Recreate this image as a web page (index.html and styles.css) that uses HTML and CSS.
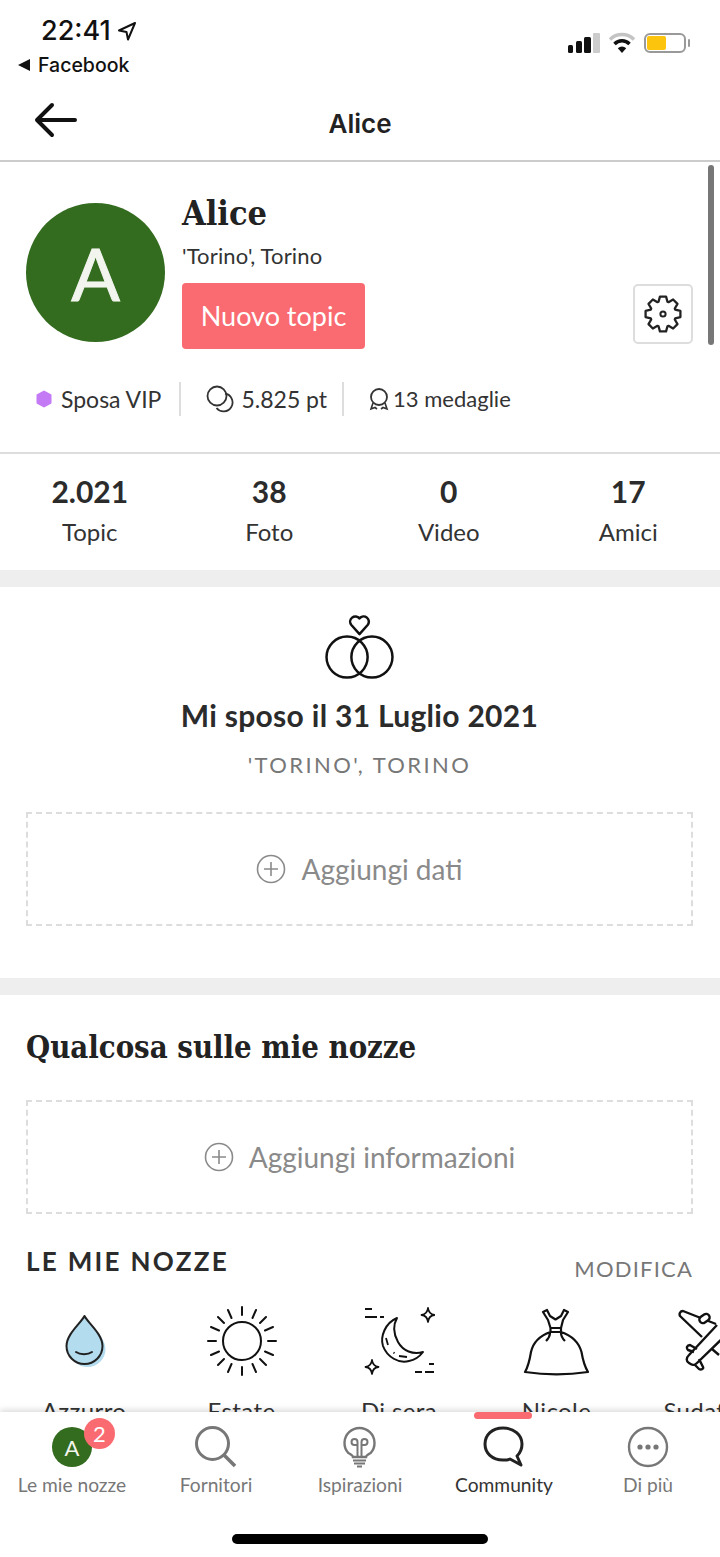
FILE: index.html
```html
<!DOCTYPE html>
<html lang="it">
 <head>
  <meta charset="UTF-8">
  <title>Alice</title>
  <meta name="viewport" content="width=device-width, initial-scale=1.0">
  <link rel="stylesheet" href="styles.css">
 </head>
 <body>
  <div class="screen">
   <div class="status">
    <div class="status-left">
     <div class="clock">22:41
      <svg class="loc" width="20" height="20" viewBox="0 0 20 20"><path d="M18 2 2 9.500l7.500 1.500L11 18.500z" fill="none" stroke="#111" stroke-width="2" stroke-linejoin="round"/></svg>
     </div>
     <div class="back-app"><span class="tri"></span>Facebook</div>
    </div>
    <div class="status-right">
     <svg width="33" height="22" viewBox="0 0 33 22"><rect x="1" y="13" width="5" height="8" rx="1.500" fill="#111"/><rect x="9" y="9" width="6" height="12" rx="1.500" fill="#111"/><rect x="17" y="5" width="7" height="16" rx="1.500" fill="#111"/><rect x="26" y="1" width="7" height="20" rx="1" fill="#ccc"/></svg>
     <svg width="28" height="22" viewBox="0 0 28 22"><path d="M2 7.500a17 17 0 0 1 24 0" fill="none" stroke="#c4c4c4" stroke-width="3.500"/><path d="M6.500 12a10.500 10.500 0 0 1 15 0" fill="none" stroke="#111" stroke-width="3.500"/><path d="M14 21 9.800 16.200a6 6 0 0 1 8.400 0z" fill="#111"/></svg>
     <div class="battery"><span class="battery-fill"></span></div>
    </div>
   </div>

   <header class="topbar">
    <svg class="back" width="44" height="36" viewBox="0 0 44 36"><path d="M41 18H4M18 3 3 18l15 15" fill="none" stroke="#111" stroke-width="4" stroke-linecap="round" stroke-linejoin="round"/></svg>
    <div class="topbar-title">Alice</div>
   </header>

   <section class="profile">
    <div class="profile-main">
     <div class="avatar">A</div>
     <div class="profile-info">
      <h1 class="name">Alice</h1>
      <div class="place">'Torino', Torino</div>
      <div class="new-topic">Nuovo topic</div>
     </div>
     <div class="gear-btn">
      <svg width="38" height="38" viewBox="0 0 38 38"><polygon transform="translate(19 19) scale(1.040)" points="-4.280,-11.750 -2.950,-16.740 2.950,-16.740 4.280,-11.750 5.280,-11.330 9.750,-13.930 13.930,-9.750 11.330,-5.280 11.750,-4.280 16.740,-2.950 16.740,2.950 11.750,4.280 11.330,5.280 13.930,9.750 9.750,13.930 5.280,11.330 4.280,11.750 2.950,16.740 -2.950,16.740 -4.280,11.750 -5.280,11.330 -9.750,13.930 -13.930,9.750 -11.330,5.280 -11.750,4.280 -16.740,2.950 -16.740,-2.950 -11.750,-4.280 -11.330,-5.280 -13.930,-9.750 -9.750,-13.930 -5.280,-11.330" fill="none" stroke="#222" stroke-width="2.200" stroke-linejoin="round"/><circle cx="19" cy="19" r="2.600" fill="none" stroke="#222" stroke-width="2"/></svg>
     </div>
    </div>
    <div class="meta">
     <div class="meta-item">
      <svg width="16" height="18" viewBox="0 0 16 18"><path d="M8 1.500l6.500 3.700v7.600L8 16.500l-6.500-3.700V5.200z" fill="#c57af5" stroke="#c57af5" stroke-width="2" stroke-linejoin="round"/></svg>
      Sposa VIP
     </div>
     <div class="meta-item coins">
      <svg width="28" height="28" viewBox="0 0 28 28"><circle cx="11" cy="11" r="9.500" fill="none" stroke="#333" stroke-width="1.800"/><path d="M19 8.500a9 9 0 1 1-8.500 14.500" fill="none" stroke="#333" stroke-width="1.800"/></svg>
      5.825 pt
     </div>
     <div class="meta-item medals">
      <svg width="20" height="24" viewBox="0 0 20 24"><circle cx="10" cy="10" r="8" fill="none" stroke="#333" stroke-width="1.800"/><path d="M4 16l-2 6 4-1.500 2 1.500M16 16l2 6-4-1.500-2 1.500" fill="none" stroke="#333" stroke-width="1.600"/></svg>
      13 medaglie
     </div>
    </div>
   </section>

   <section class="stats">
    <div class="stat"><b>2.021</b><span>Topic</span></div>
    <div class="stat"><b>38</b><span>Foto</span></div>
    <div class="stat"><b>0</b><span>Video</span></div>
    <div class="stat"><b>17</b><span>Amici</span></div>
   </section>

   <section class="wedding">
    <svg class="rings" width="69" height="65" viewBox="0 0 72 68"><path d="M36 20 27.500 10.500a5.500 5.500 0 0 1 8.500-7 5.500 5.500 0 0 1 8.500 7z" fill="none" stroke="#111" stroke-width="2.600" stroke-linejoin="round"/><circle cx="23" cy="44" r="21.500" fill="none" stroke="#111" stroke-width="2.600"/><circle cx="49" cy="44" r="21.500" fill="none" stroke="#111" stroke-width="2.600"/></svg>
    <h2 class="wedding-title">Mi sposo il 31 Luglio 2021</h2>
    <div class="wedding-place">'TORINO', TORINO</div>
    <div class="dashed">
     <svg width="30" height="30" viewBox="0 0 30 30"><circle cx="15" cy="15" r="13.500" fill="none" stroke="#8a8a8a" stroke-width="1.600"/><path d="M15 8v14M8 15h14" stroke="#8a8a8a" stroke-width="1.600"/></svg>
     Aggiungi dati
    </div>
   </section>

   <section class="about">
    <h2 class="about-title">Qualcosa sulle mie nozze</h2>
    <div class="dashed">
     <svg width="30" height="30" viewBox="0 0 30 30"><circle cx="15" cy="15" r="13.500" fill="none" stroke="#8a8a8a" stroke-width="1.600"/><path d="M15 8v14M8 15h14" stroke="#8a8a8a" stroke-width="1.600"/></svg>
     Aggiungi informazioni
    </div>
    <div class="section-head">
     <div class="section-title">LE MIE NOZZE</div>
     <div class="section-link">MODIFICA</div>
    </div>
    <div class="themes">
     <div class="theme">
      <svg width="72" height="72" viewBox="0 0 72 72"><path d="M36.500 11C33 18 18.500 29 18.500 41a18 18 0 0 0 36 0C54.500 29 40 18 36.500 11z" fill="#b3dcef" transform="translate(3 3)"/><path d="M36.500 11C33 18 18.500 29 18.500 41a18 18 0 0 0 36 0C54.500 29 40 18 36.500 11z" fill="#b3dcef" stroke="#222" stroke-width="2" stroke-linejoin="round"/><path d="M28 47c4 3 12 3 16 0" fill="none" stroke="#222" stroke-width="2" stroke-linecap="round"/></svg>
      <span>Azzurro</span>
     </div>
     <div class="theme">
      <svg width="72" height="72" viewBox="0 0 72 72"><circle cx="36" cy="36" r="19" fill="none" stroke="#111" stroke-width="2"/><g stroke="#111" stroke-width="2" stroke-linecap="round"><path d="M36 2v8M36 62v8M2 36h8M62 36h8M22 5l3.500 8M46.500 59l3.500 8M50 5l-3.500 8M25.500 59 22 67M5 22l8 3.500M59 46.500l8 3.500M67 22l-8 3.500M13 46.500 5 50M12 12l6 6M54 54l6 6M60 12l-6 6M18 54l-6 6"/></g></svg>
      <span>Estate</span>
     </div>
     <div class="theme">
      <svg width="72" height="72" viewBox="0 0 72 72"><path d="M34 13C22 18 17 32 20 41c4 11 16 18 26 15 6-1 11-5 14-9-10 3-20-1-25-10-5-9-5-17-1-24z" fill="none" stroke="#111" stroke-width="2" stroke-linejoin="round"/><path d="M23 33l2 7M30.500 47.500l1 .8M36 51l8 1" stroke="#111" stroke-width="1.800" fill="none"/><path d="M2 4h7M2 12h12M17 12h4M66 59h5M52 67h7M62 67h9" stroke="#111" stroke-width="2" fill="none"/><path d="M65 3c.5 4 2.500 6.500 6.500 7-4 .5-6 3-6.500 7-.5-4-2.500-6.500-6.500-7 4-.5 6-3 6.500-7zM9 55c.5 4 2.500 6.500 6.500 7-4 .5-6 3-6.500 7-.5-4-2.500-6.500-6.500-7 4-.5 6-3 6.500-7z" fill="none" stroke="#111" stroke-width="1.800" stroke-linejoin="round"/></svg>
      <span>Di sera</span>
     </div>
     <div class="theme">
      <svg width="72" height="72" viewBox="0 0 72 72"><path d="M22 7l4-2 3 6 5.500 3.500L40 11l3-6 4 2-5 8-2 8H29.500L27 15zM29.500 23H40v4H29.500zM29.500 27C18 31 12 38 10 47 8.500 56 7 62 4 67c20 3 43 3 63 0-3-5-5-11-6.500-20C58 38 52 31 40 27M29 28c0 3-2 6-4 8M40 28c0 3 2 6 4 8" fill="none" stroke="#111" stroke-width="2.200" stroke-linejoin="round"/></svg>
      <span>Nicole</span>
     </div>
     <div class="theme">
      <svg width="72" height="72" viewBox="0 0 72 72"><path d="M24 32 2 11c-1-2 0-5 3-5l33 13M39 20 11 50c-3 3-3 6 0 8s5 3 8 0l30-29M16 47l-6-2c-2-2-1-5 2-5l7 4M21 54l4 8c1 2-2 3-4 2l-5-5M34 44l7 6" fill="none" stroke="#111" stroke-width="2.400" stroke-linejoin="round"/><rect x="21" y="10" width="11" height="7" rx="3.500" fill="#fff" stroke="#111" stroke-width="2.400" transform="rotate(-35 26.500 13.500)"/></svg>
      <span>Sudafrica</span>
     </div>
    </div>
   </section>

   <div class="scrollbar"></div>

   <nav class="tabbar">
    <div class="tab">
     <div class="tab-avatar">A<span class="badge">2</span></div>
     <span>Le mie nozze</span>
    </div>
    <div class="tab">
     <svg width="42" height="42" viewBox="0 0 42 42"><circle cx="17.500" cy="17.500" r="16" fill="none" stroke="#777" stroke-width="3"/><path d="M29 29l11 11" stroke="#777" stroke-width="3.500"/></svg>
     <span>Fornitori</span>
    </div>
    <div class="tab">
     <svg width="42" height="42" viewBox="0 0 42 42"><path d="M14 31c0-1.500-2-2.500-4.700-4a15 15 0 1 1 22.400 0C29 28.500 27 29.500 27 31z" fill="none" stroke="#777" stroke-width="2.400"/><path d="M14 34.500h13M15 37.500h11M18 40.500h5M18.500 30V16a3 3 0 1 0-3 3h3M22.500 30V16a3 3 0 1 1 3 3h-3" fill="none" stroke="#777" stroke-width="2"/></svg>
     <span>Ispirazioni</span>
    </div>
    <div class="tab active">
     <svg width="42" height="42" viewBox="0 0 42 42"><path d="M20 2C9 2 2 9 2 18s7 16 18 16c3 0 5 0 7-1l11 6-4-9c3-3 5-8 5-12C39 9 31 2 20 2z" fill="none" stroke="#222" stroke-width="3" stroke-linejoin="round"/></svg>
     <span>Community</span>
    </div>
    <div class="tab">
     <svg width="42" height="42" viewBox="0 0 42 42"><circle cx="21" cy="21" r="19" fill="none" stroke="#777" stroke-width="2.400"/><circle cx="13" cy="21" r="2.600" fill="#777"/><circle cx="21" cy="21" r="2.600" fill="#777"/><circle cx="29" cy="21" r="2.600" fill="#777"/></svg>
     <span>Di più</span>
    </div>
    <div class="home-bar"></div>
   </nav>
  </div>
 </body>
</html>
```

FILE: styles.css
```css
* {
  box-sizing: border-box;
}
body {
  margin: 0;
  font-family: 'Lato', sans-serif;
  color: #333;
  background: #fff;
}
h1, h2 {
  margin: 0;
}
.screen {
  position: relative;
  width: 720px;
  height: 1557px;
  overflow: hidden;
}

/* status bar */
.status {
  height: 90px;
  display: flex;
  justify-content: space-between;
  padding: 14px 34px 0 18px;
}
.clock {
  font-family: 'Inter', sans-serif;
  font-size: 27px;
  font-weight: 500;
  line-height: 34px;
  color: #111;
  padding-left: 23px;
  display: flex;
  align-items: center;
  gap: 6px;
}
.back-app {
  font-family: 'Inter', sans-serif;
  font-size: 19.500px;
  font-weight: 500;
  line-height: 28px;
  color: #111;
  margin-top: 3px;
  display: flex;
  align-items: center;
  gap: 8px;
}
.tri {
  width: 0;
  height: 0;
  border-top: 6px solid transparent;
  border-bottom: 6px solid transparent;
  border-right: 12px solid #111;
}
.status-right {
  display: flex;
  align-items: center;
  gap: 8px;
  height: 30px;
  margin-top: 14px;
}
.battery {
  position: relative;
  width: 42px;
  height: 20px;
  border: 2px solid #999;
  border-radius: 6px;
  padding: 1px;
}
.battery::after {
  content: "";
  position: absolute;
  right: -6px;
  top: 4px;
  width: 2px;
  height: 8px;
  background: #999;
  border-radius: 1px;
}
.battery-fill {
  display: block;
  width: 19px;
  height: 14px;
  background: #fcc40c;
  border-radius: 2px;
}

/* top bar */
.topbar {
  height: 72px;
  border-bottom: 2px solid #ccc;
  display: flex;
  align-items: center;
  justify-content: center;
  position: relative;
}
.back {
  position: absolute;
  left: 34px;
  top: 12px;
}
.topbar-title {
  font-family: 'Inter', sans-serif;
  font-size: 26px;
  font-weight: 600;
  color: #222;
  padding-bottom: 3px;
}

/* profile */
.profile {
  height: 292px;
  border-bottom: 2px solid #ddd;
  padding: 30px 27px 0 26px;
}
.profile-main {
  display: flex;
  align-items: flex-start;
}
.avatar {
  width: 139px;
  height: 139px;
  margin-top: 11px;
  border-radius: 50%;
  background: #336b1f;
  color: #f2f5ee;
  font-size: 72px;
  -webkit-text-stroke: 1px #f2f5ee;
  display: flex;
  align-items: center;
  justify-content: center;
  flex-shrink: 0;
}
.profile-info {
  margin-left: 17px;
  flex: 1;
}
.name {
  font-family: 'DejaVu Serif', serif;
  font-stretch: condensed;
  font-size: 34px;
  line-height: 42px;
  color: #222;
}
.place {
  font-size: 22px;
  letter-spacing: 0.15px;
  line-height: 28px;
  margin-top: 8px;
}
.new-topic {
  width: 183px;
  height: 66px;
  margin-top: 13px;
  background: #f96b71;
  border-radius: 4px;
  color: #fff;
  font-size: 27px;
  display: flex;
  align-items: center;
  justify-content: center;
  padding-bottom: 2px;
}
.gear-btn {
  width: 60px;
  height: 60px;
  margin-top: 92px;
  border: 2px solid #ddd;
  border-radius: 5px;
  display: flex;
  align-items: center;
  justify-content: center;
}
.meta {
  display: flex;
  margin-top: 33px;
  height: 34px;
}
.meta-item {
  display: flex;
  align-items: center;
  gap: 9px;
  font-size: 23px;
  padding: 0 18px 0 10px;
  border-right: 2px solid #ddd;
}
.meta-item + .meta-item {
  padding-left: 25px;
}
.coins {
  gap: 7px;
  padding-right: 15px;
}
.medals {
  border-right: none;
  gap: 4px;
  font-size: 22px;
  padding-bottom: 1px;
}

/* counters */
.stats {
  height: 133px;
  display: grid;
  grid-template-columns: repeat(4, 179.500px);
  border-bottom: 17px solid #eee;
  padding-top: 19px;
}
.stat {
  display: flex;
  flex-direction: column;
  align-items: center;
}
.stat b {
  font-size: 30px;
  line-height: 36px;
  color: #2b2b2b;
}
.stat span {
  font-size: 24px;
  line-height: 30px;
  margin-top: 8px;
}

/* wedding */
.wedding {
  height: 408px;
  border-bottom: 17px solid #eee;
  padding: 28px 27px 0 26px;
  display: flex;
  flex-direction: column;
  align-items: center;
}
.wedding-title {
  font-size: 30px;
  letter-spacing: 0.3px;
  line-height: 36px;
  margin-top: 17px;
  color: #2b2b2b;
}
.wedding-place {
  font-size: 22px;
  letter-spacing: 2.400px;
  line-height: 28px;
  margin-top: 18px;
  color: #777;
}
.dashed {
  width: 100%;
  height: 114px;
  border: 2px dashed #ddd;
  display: flex;
  align-items: center;
  justify-content: center;
  gap: 15px;
  font-size: 28px;
  color: #8a8a8a;
  padding-bottom: 1px;
}
.wedding .dashed {
  margin-top: 33px;
}

/* about */
.about {
  padding: 30px 27px 0 26px;
}
.about-title {
  font-family: 'DejaVu Serif', serif;
  font-stretch: condensed;
  font-size: 30.800px;
  line-height: 44px;
  color: #222;
}
.about .dashed {
  margin-top: 31px;
}
.section-head {
  display: flex;
  justify-content: space-between;
  margin-top: 30px;
}
.section-title {
  font-size: 26px;
  font-weight: 700;
  letter-spacing: 2.300px;
  line-height: 34px;
  color: #2b2b2b;
}
.section-link {
  font-size: 22px;
  letter-spacing: 1.200px;
  line-height: 28px;
  margin-top: 11px;
  color: #777;
}
.themes {
  display: flex;
  margin-top: 22px;
  margin-left: 22px;
  gap: 85.500px;
  white-space: nowrap;
}
.theme {
  width: 72px;
  flex-shrink: 0;
  display: flex;
  flex-direction: column;
  align-items: center;
  font-size: 24px;
  letter-spacing: 0.4px;
  gap: 19px;
}

.scrollbar {
  position: absolute;
  left: 708px;
  top: 165px;
  width: 6px;
  height: 180px;
  border-radius: 3px;
  background: #777;
}

/* bottom tabs */
.tabbar {
  position: absolute;
  left: 0;
  bottom: 0;
  width: 720px;
  height: 145px;
  background: #fff;
  box-shadow: 0 -2px 6px rgba(0,0,0,0.15);
  display: flex;
  padding-top: 14px;
}
.tab {
  width: 144px;
  height: 72px;
  display: flex;
  flex-direction: column;
  align-items: center;
  font-size: 19.200px;
  color: #777;
  position: relative;
  gap: 5px;
}
.tab.active {
  color: #333;
}
.tab.active::before {
  content: "";
  position: absolute;
  top: -14px;
  left: 42px;
  width: 58px;
  height: 7px;
  border-radius: 4px;
  background: #f96b71;
}
.tab-avatar {
  position: relative;
  width: 40px;
  height: 40px;
  margin-top: 1px;
  margin-bottom: 1px;
  border-radius: 50%;
  background: #336b1f;
  color: #f2f5ee;
  font-size: 22px;
  display: flex;
  align-items: center;
  justify-content: center;
}
.badge {
  position: absolute;
  left: 32px;
  top: -9px;
  width: 31px;
  height: 31px;
  border-radius: 50%;
  background: #f96b71;
  color: #fff;
  font-size: 22px;
  display: flex;
  align-items: center;
  justify-content: center;
}
.home-bar {
  position: absolute;
  left: 232px;
  top: 122px;
  width: 256px;
  height: 10px;
  border-radius: 5px;
  background: #000;
}
```
